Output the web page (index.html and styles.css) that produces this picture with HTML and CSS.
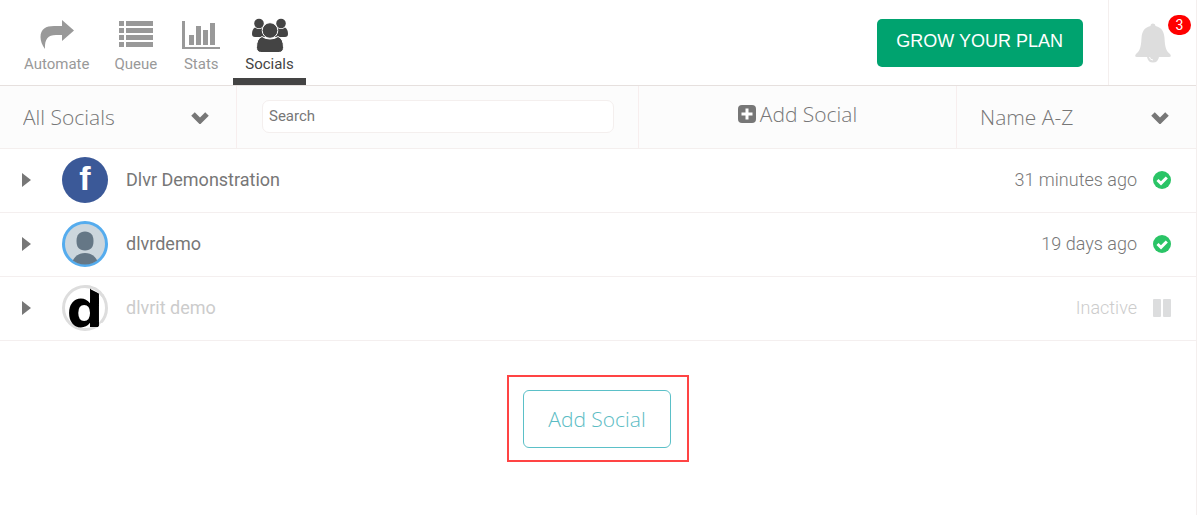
FILE: index.html
```html
<!DOCTYPE html>
<html lang="en">
<head>
<meta charset="utf-8">
<meta name="viewport" content="width=device-width, initial-scale=1">
<title>Socials</title>
<link rel="stylesheet" href="styles.css">
</head>
<body>
<div class="page">
  <header class="topbar">
    <nav class="tabs">
      <a class="tab" href="#automate">
        <svg class="tab-icon" width="36" height="34" viewBox="0 0 36 34" aria-hidden="true"><path d="M23 2 35 12.500 23 23V17H17C9 17 5.500 21 6 31C3 27 1.500 23 1.500 19C1.500 11 7 8 15 8H23Z"/></svg>
        <span>Automate</span>
      </a>
      <a class="tab" href="#queue">
        <svg class="tab-icon" width="34" height="34" viewBox="0 0 34 34" aria-hidden="true"><path d="M0 3h5v5H0zM7 3h27v5H7zM0 10h5v5H0zM7 10h27v5H7zM0 17h5v5H0zM7 17h27v5H7zM0 24h5v5H0zM7 24h27v5H7z"/></svg>
        <span>Queue</span>
      </a>
      <a class="tab" href="#stats">
        <svg class="tab-icon" width="38" height="34" viewBox="0 0 38 34" aria-hidden="true"><path d="M0 3h3v26h35v2H0zM7 17h5v10H7zM14 8h5v19h-5zM21 12h5v15h-5zM28 5h5v22h-5z"/></svg>
        <span>Stats</span>
      </a>
      <a class="tab tab-active" href="#socials" aria-current="page">
        <svg class="tab-icon" width="36" height="34" viewBox="0 0 36 34" aria-hidden="true">
          <circle cx="7" cy="5.500" r="4.800"/><circle cx="29" cy="5.500" r="4.800"/>
          <path d="M3 9.500q4 3 8 0l3 9.500H3Q0 19 0 16Q0 11 3 9.500ZM33 9.500q-4 3-8 0l-3 9.500h11q3 0 3-3q0-5-3-6.500Z"/>
          <path class="tab-cut" d="M10 18.500q3 2.500 8 2.500t8-2.500q5.500 2 5.500 11q0 5-5 5H9.500q-5 0-5-5q0-9 5.500-11Z"/>
          <circle class="tab-cut" cx="18" cy="12.500" r="7.800"/>
        </svg>
        <span>Socials</span>
      </a>
    </nav>
    <button class="grow" type="button">GROW YOUR PLAN</button>
    <button class="bell" type="button" aria-label="Notifications, 3 new">
      <svg width="36" height="40" viewBox="0 0 36 40" aria-hidden="true"><path d="M15.500 3a2.500 2.500 0 0 1 5 0C27 4.500 29 9 29.500 15C30 24 31 28 35 31Q37 34 34 34H24Q23 39.500 18 39.500T12 34H2Q-1 34 1 31C5 28 6 24 6.500 15C7 9 9 4.500 15.500 3Z"/><path class="bell-line" d="M14.500 34q.5 3 3.500 3"/></svg>
      <span class="badge">3</span>
    </button>
  </header>

  <section class="toolbar" aria-label="Filters">
    <div class="cell picker">
      <select aria-label="Filter socials"><option>All Socials</option></select>
      <svg class="chevron" width="18" height="12" viewBox="0 0 18 12" aria-hidden="true"><path d="M2 2 9 9 16 2"/></svg>
    </div>
    <div class="cell search">
      <input type="search" placeholder="Search" aria-label="Search">
    </div>
    <div class="cell add">
      <button class="add-link" type="button">
        <svg width="18" height="18" viewBox="0 0 18 18" aria-hidden="true"><rect width="18" height="18" rx="4"/><path d="M9 3.500v11M3.500 9h11"/></svg>
        Add Social
      </button>
    </div>
    <div class="cell picker">
      <select aria-label="Sort order"><option>Name A-Z</option></select>
      <svg class="chevron" width="18" height="12" viewBox="0 0 18 12" aria-hidden="true"><path d="M2 2 9 9 16 2"/></svg>
    </div>
  </section>

  <main>
    <ul class="list">
      <li class="row">
        <button class="expand" type="button" aria-label="Expand Dlvr Demonstration"><svg width="9" height="14" viewBox="0 0 9 14" aria-hidden="true"><path d="M0 0 9 7 0 14Z"/></svg></button>
        <svg class="avatar" width="46" height="46" viewBox="0 0 46 46" role="img" aria-label="Facebook"><circle cx="23" cy="23" r="23" fill="#3b5998"/><text class="fb" x="23" y="33" text-anchor="middle">f</text></svg>
        <span class="name">Dlvr Demonstration</span>
        <span class="when">31 minutes ago</span>
        <svg class="status" width="18" height="18" viewBox="0 0 18 18" role="img" aria-label="Active"><circle cx="9" cy="9" r="9" fill="#2ac466"/><path class="tick" d="M4.500 9 8 12.300 13.800 6.500"/></svg>
      </li>
      <li class="row">
        <button class="expand" type="button" aria-label="Expand dlvrdemo"><svg width="9" height="14" viewBox="0 0 9 14" aria-hidden="true"><path d="M0 0 9 7 0 14Z"/></svg></button>
        <svg class="avatar" width="46" height="46" viewBox="0 0 46 46" role="img" aria-label="Profile picture">
          <defs><clipPath id="disc"><circle cx="23" cy="23" r="20.500"/></clipPath></defs>
          <circle cx="23" cy="23" r="21.500" fill="#ccd6dd" stroke="#55acee" stroke-width="3"/>
          <g clip-path="url(#disc)" fill="#657786"><path d="M23 10.500C28.500 10.500 31.500 14 31.500 20C31.500 26 29 29.500 23 29.500S14.500 26 14.500 20C14.500 14 17.500 10.500 23 10.500Z"/><path d="M10 41q4-9 13-9t13 9v5H10z"/></g>
        </svg>
        <span class="name">dlvrdemo</span>
        <span class="when">19 days ago</span>
        <svg class="status" width="18" height="18" viewBox="0 0 18 18" role="img" aria-label="Active"><circle cx="9" cy="9" r="9" fill="#2ac466"/><path class="tick" d="M4.500 9 8 12.300 13.800 6.500"/></svg>
      </li>
      <li class="row row-inactive">
        <button class="expand" type="button" aria-label="Expand dlvrit demo"><svg width="9" height="14" viewBox="0 0 9 14" aria-hidden="true"><path d="M0 0 9 7 0 14Z"/></svg></button>
        <svg class="avatar" width="46" height="46" viewBox="0 0 46 46" role="img" aria-label="dlvrit logo">
          <circle cx="23" cy="23" r="21.500" fill="#fff" stroke="#ddd" stroke-width="3"/>
          <text class="dl" x="23" y="42" text-anchor="middle">d</text>
          <path fill="#fff" d="M27 1 29 4.500 38 9H42V1Z"/>
          <path fill="#fff" d="M39 38 36 42 36 44H42V38Z"/>
          <path fill="none" stroke="#ddd" stroke-width="3" d="M23 1.500A21.500 21.500 0 0 1 41 11.200"/>
        </svg>
        <span class="name">dlvrit demo</span>
        <span class="when">Inactive</span>
        <svg class="status" width="18" height="18" viewBox="0 0 18 18" role="img" aria-label="Paused"><path fill="#dcddde" d="M1 0H7Q8 0 8 1V17Q8 18 7 18H1Q0 18 0 17V1Q0 0 1 0ZM11 0H17Q18 0 18 1V17Q18 18 17 18H11Q10 18 10 17V1Q10 0 11 0Z"/></svg>
      </li>
    </ul>
    <div class="cta">
      <div class="highlight"><button class="cta-button" type="button">Add Social</button></div>
    </div>
  </main>
</div>
</body>
</html>
```

FILE: styles.css
```css
* { box-sizing: border-box; }

body {
  margin: 0;
  background: #fff;
  color: #777;
  font-family: Roboto, sans-serif;
}

button, select, input { font: inherit; color: inherit; }

button {
  margin: 0;
  padding: 0;
  border: 0;
  background: none;
  cursor: pointer;
}

.page {
  min-height: 100vh;
  border-right: 1px solid #f4efee;
}

.topbar {
  display: flex;
  align-items: stretch;
  min-height: 86px;
  border-bottom: 1px solid #e6e0de;
}

.tabs {
  display: flex;
  gap: 1px;
  margin-left: 12px;
}

.tab {
  display: flex;
  flex-direction: column;
  align-items: center;
  gap: 2px;
  padding: 18px 12px 0;
  border-bottom: 7px solid transparent;
  color: #999;
  font-size: 15px;
  line-height: 20px;
  text-decoration: none;
}

.tab-icon { fill: currentColor; }

.tab-active {
  color: #444;
  border-bottom-color: #444;
}

.tab-cut {
  stroke: #fff;
  stroke-width: 1;
}

.grow {
  align-self: center;
  margin-left: auto;
  margin-right: 25px;
  padding: 0 20px 2px 19px;
  height: 48px;
  border-radius: 5px;
  background: #00a36f;
  color: #fff;
  font-family: "Liberation Sans", Arial, sans-serif;
  font-size: 18px;
}

.bell {
  position: relative;
  width: 88px;
  border-left: 1px solid #f4efee;
}

.bell svg {
  display: block;
  margin: 0 auto;
  fill: #ddd;
}

.bell .bell-line {
  fill: none;
  stroke: #fff;
}

.badge {
  position: absolute;
  top: 15px;
  right: 5px;
  width: 23px;
  border-radius: 10px;
  background: #f00;
  color: #fff;
  font-size: 14px;
  line-height: 20px;
}

.toolbar {
  display: grid;
  grid-template-columns: 237fr 402fr 318fr 239fr;
  min-height: 63px;
  border-bottom: 1px solid #f4efee;
  background: #fcfcfc;
  font-family: "Open Sans", sans-serif;
  font-size: 21px;
  font-weight: 300;
}

.cell { border-right: 1px solid #f7eeee; }
.cell:last-child { border-right: 0; }

.picker { display: grid; align-items: center; }

.picker select {
  grid-area: 1 / 1;
  width: 100%;
  height: 100%;
  padding: 0 50px 0 23px;
  border: 0;
  background: none;
  appearance: none;
}

.chevron {
  grid-area: 1 / 1;
  justify-self: end;
  margin: 2px 27px 0 0;
  fill: none;
  stroke: #777;
  stroke-width: 5;
  pointer-events: none;
}

.search {
  display: flex;
  align-items: center;
  padding: 0 24px 2px 25px;
}

.search input {
  width: 100%;
  height: 33px;
  padding: 0 6px;
  border: 1px solid #f4efee;
  border-radius: 7px;
  background: #fff;
  font-family: Roboto, sans-serif;
  font-size: 15px;
  font-weight: 400;
}

.search input::placeholder { color: #777; opacity: 1; }

.add {
  display: flex;
  align-items: center;
  justify-content: center;
  padding-bottom: 6px;
}

.add-link {
  display: flex;
  align-items: center;
  gap: 4px;
}

.add-link rect { fill: #777; }
.add-link path { stroke: #fff; stroke-width: 3; }

.list {
  margin: 0;
  padding: 0;
  list-style: none;
}

.row {
  display: flex;
  align-items: center;
  min-height: 64px;
  padding: 0 25px 2px 22px;
  border-bottom: 1px solid #f4efef;
  font-size: 18px;
  line-height: 24px;
}

.expand {
  display: flex;
  margin-right: 31px;
}

.expand svg { fill: #777; }

.avatar { margin-right: 18px; }

.fb {
  fill: #fff;
  font-family: "Liberation Sans", Arial, sans-serif;
  font-size: 34px;
  font-weight: 700;
}

.dl {
  fill: #000;
  font-family: "DejaVu Sans", sans-serif;
  font-size: 51px;
  font-weight: 700;
}

.when {
  margin-left: auto;
  margin-right: 16px;
  font-weight: 300;
}

.tick {
  fill: none;
  stroke: #fff;
  stroke-width: 3;
}

.row-inactive .name,
.row-inactive .when { color: #ccc; }

.cta {
  display: flex;
  justify-content: center;
  padding-top: 34px;
}

.highlight {
  padding: 13px 16px 12px 14px;
  border: 2px solid #f44;
}

.cta-button {
  height: 58px;
  padding: 0 24px;
  border: 1px solid #5bc0c8;
  border-radius: 6px;
  color: #5bbcc4;
  font-family: "Open Sans", sans-serif;
  font-size: 21px;
  font-weight: 300;
}
```
